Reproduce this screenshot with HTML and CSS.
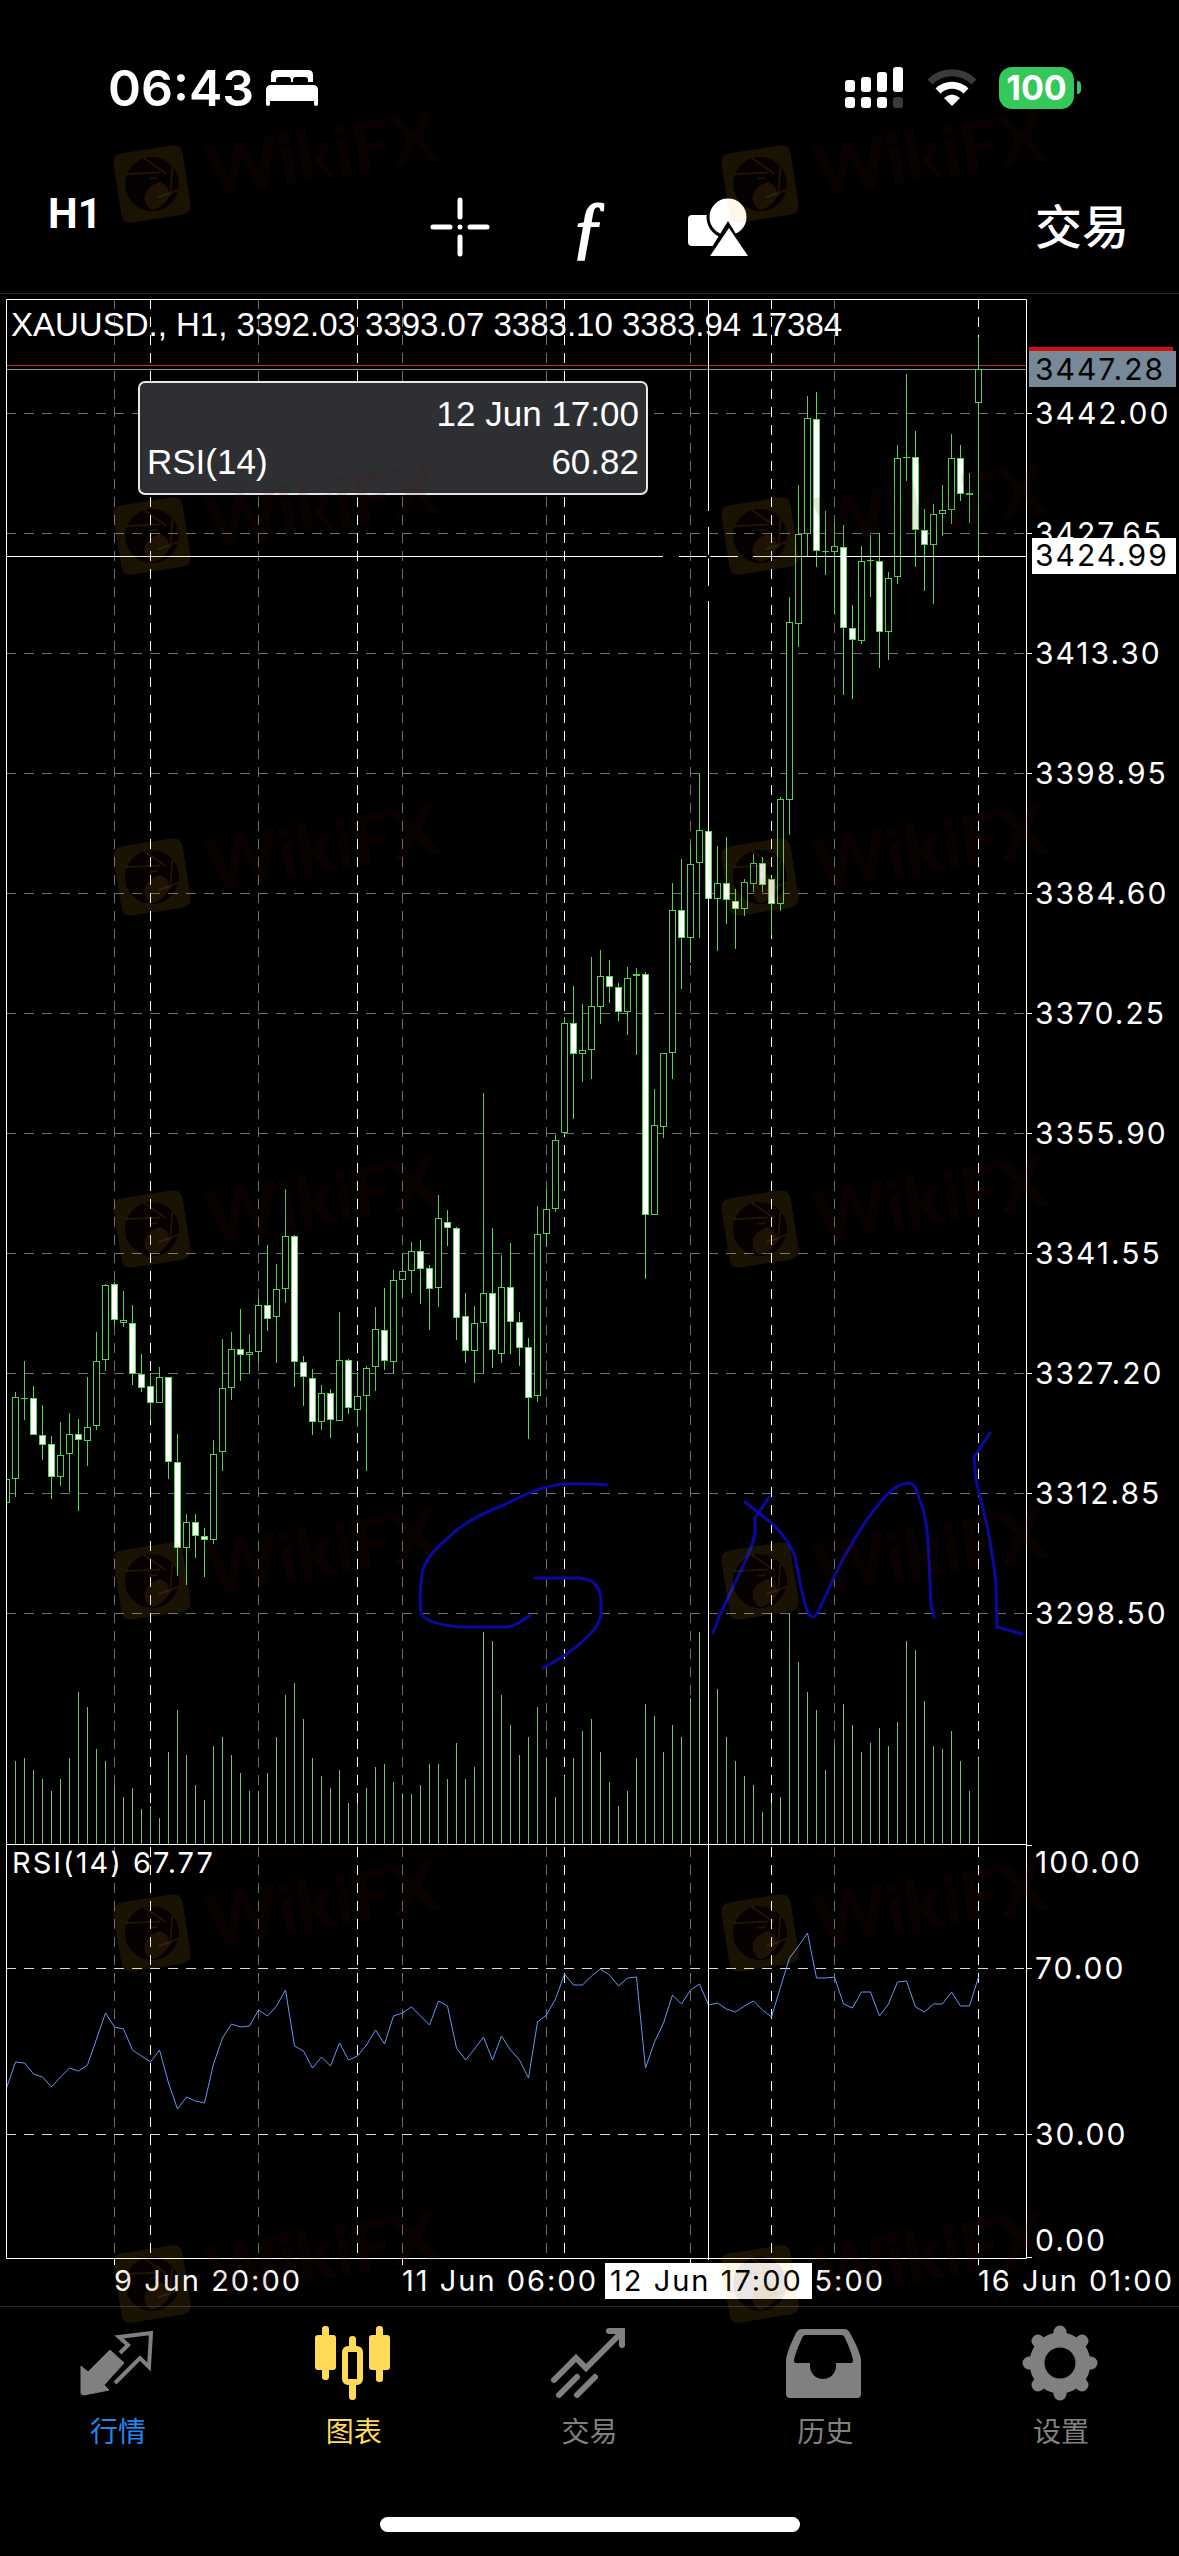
FILE: index.html
```html
<!DOCTYPE html>
<html lang="zh-CN">
<head>
    <meta charset="UTF-8">
    <meta name="viewport" content="width=device-width, initial-scale=1.0">
    <title>XAUUSD H1</title>
    <link rel="stylesheet" href="styles.css">
</head>
<body>
    <div class="status-bar">
        <div class="status-left">
            <span class="clock">06:43</span>
            <svg class="bed" viewBox="0 0 52 36" width="52" height="36" fill="#fff">
                <path d="M5 12V5Q5 0 10 0H42Q47 0 47 5V12H42V10Q42 7 39 7H30Q27 7 27 10V12H25V10Q25 7 22 7H13Q10 7 10 10V12Z"/>
                <path d="M0 34V20Q0 15 5 15H47Q52 15 52 20V34Q52 36 50 36Q48 36 48 34V31H4V34Q4 36 2 36Q0 36 0 34Z"/>
            </svg>
        </div>
        <div class="status-right">
            <svg viewBox="0 0 60 42" width="60" height="42" fill="#fff">
                <rect x="0" y="13" width="10" height="12" rx="3"/>
                <rect x="16" y="10" width="10" height="15" rx="3"/>
                <rect x="32" y="5" width="10" height="20" rx="3"/>
                <rect x="48" y="0" width="10" height="25" rx="3"/>
                <rect x="0" y="30" width="10" height="11" rx="3"/>
                <rect x="16" y="30" width="10" height="11" rx="3"/>
                <rect x="32" y="30" width="10" height="11" rx="3"/>
                <rect x="48" y="30" width="10" height="11" rx="3" fill="#3a3a3a"/>
            </svg>
            <svg viewBox="0 0 50 38" width="50" height="38">
                <path d="M3 13A31 31 0 0 1 47 13" fill="none" stroke="#3a3a3a" stroke-width="7"/>
                <path d="M11 22A20 20 0 0 1 39 22" fill="none" stroke="#fff" stroke-width="7"/>
                <path d="M25 37L17 29Q25 22 33 29Z" fill="#fff"/>
            </svg>
            <div class="battery">100</div>
        </div>
    </div>

    <header class="toolbar">
        <button class="timeframe">H1</button>
        <div class="tools">
            <button aria-label="Crosshair">
                <svg viewBox="0 0 60 60" width="60" height="60" stroke="#fff" stroke-width="5" stroke-linecap="round">
                    <path d="M30 3V20M30 40V57M3 30H20M40 30H57M30 30V30"/>
                </svg>
            </button>
            <button class="indicator" aria-label="Indicators">ƒ</button>
            <button aria-label="Objects">
                <svg viewBox="0 0 60 60" width="60" height="60" fill="#fff">
                    <rect x="0" y="18" width="36" height="31" rx="4"/>
                    <circle cx="40" cy="20" r="20" stroke="#000" stroke-width="3"/>
                    <path d="M40 24L64 63H16Z" fill="#000"/>
                    <path d="M41 31L60 59H22Z"/>
                </svg>
            </button>
        </div>
        <button class="trade">交易</button>
    </header>

    <main class="chart">
        <svg id="chart" viewBox="0 294 1179 2012"></svg>
        <div class="tooltip">
            <div class="tooltip-date">12 Jun 17:00</div>
            <div class="tooltip-row"><span>RSI(14)</span><span>60.82</span></div>
        </div>
    </main>

    <nav class="tabs">
        <a class="tab tab-quotes" href="#">
            <svg viewBox="0 0 80 80" width="80" height="80">
                <path d="M3 43L10 49L32 27L46 40L26 62L31 67L6 72Q3 72 3 70Z" fill="currentColor" stroke="currentColor" stroke-linejoin="round"/>
                <path d="M42 30L50 22L41 14L73 10L71 44L62 35L37 60" fill="none" stroke="currentColor" stroke-width="4"/>
            </svg>
            <span>行情</span>
        </a>
        <a class="tab tab-active" href="#">
            <svg viewBox="0 0 80 80" width="80" height="80" fill="currentColor">
                <rect x="1" y="12" width="21" height="35" rx="3"/>
                <rect x="8" y="3" width="7" height="54" rx="3"/>
                <rect x="55" y="12" width="21" height="35" rx="3"/>
                <rect x="62" y="3" width="7" height="56" rx="3"/>
                <rect x="31" y="26" width="15" height="33" rx="3" fill="none" stroke="currentColor" stroke-width="6"/>
                <path d="M35 25V16Q35 13 38.5 13Q42 13 42 16V25ZM35 60V74Q35 77 38.5 77Q42 77 42 74V60Z"/>
            </svg>
            <span>图表</span>
        </a>
        <a class="tab" href="#">
            <svg viewBox="0 0 80 80" width="80" height="80" fill="none" stroke="currentColor" stroke-width="6" stroke-linecap="round">
                <path d="M5 57L27 35L37 45L73 9M60 8H73V22"/>
                <path d="M10 72L28 54M28 72L46 54"/>
            </svg>
            <span>交易</span>
        </a>
        <a class="tab" href="#">
            <svg viewBox="0 0 80 80" width="80" height="80" fill="currentColor">
                <path fill-rule="evenodd" d="M1 71V38Q1 30 11 10Q13 6 17 6H59Q63 6 65 10Q76 30 76 38V71Q76 75 72 75H5Q1 75 1 71ZM9 38Q9 40 11 40H25V43A13 13 0 0 0 51 43V40H66Q68 40 68 38Q68 33 60 15Q59 12 56 12H21Q18 12 17 15Q9 33 9 38Z"/>
            </svg>
            <span>历史</span>
        </a>
        <a class="tab" href="#">
            <svg viewBox="0 0 80 80" width="80" height="80" fill="none" stroke="currentColor">
                <circle cx="39" cy="40" r="23" stroke-width="15"/>
                <path stroke-width="13" stroke-linecap="round" d="M39 9V16M39 64V71M8 40H15M63 40H70M17 18L22 23M56 57L61 62M17 62L22 57M56 23L61 18"/>
            </svg>
            <span>设置</span>
        </a>
    </nav>
    <div class="home-indicator"></div>

    <svg class="watermark" id="watermark" viewBox="0 0 1179 2556" aria-hidden="true"></svg>

    <script src="chart.js"></script>
</body>
</html>
```
FILE: styles.css
```css
* {
    margin: 0;
    padding: 0;
    box-sizing: border-box;
}

body {
    position: relative;
    min-height: 100vh;
    display: flex;
    flex-direction: column;
    background: #000;
    color: #fff;
    font-family: Inter, 'Noto Sans CJK SC', sans-serif;
}

button {
    display: flex;
    background: none;
    border: none;
    color: #fff;
    font-family: inherit;
}

/* status bar */
.status-bar {
    display: flex;
    justify-content: space-between;
    align-items: center;
    height: 120px;
    padding: 56px 97px 0 108px;
}

.status-left,
.status-right {
    display: flex;
    align-items: center;
    gap: 22px;
}

.status-left {
    gap: 12px;
}

.clock {
    font-size: 50px;
    font-weight: 600;
}

.battery {
    position: relative;
    width: 75px;
    height: 42px;
    margin-right: 8px;
    border-radius: 13px;
    background: #34c759;
    font-size: 34px;
    font-weight: 700;
    line-height: 42px;
    text-align: center;
}

.battery::after {
    content: '';
    position: absolute;
    right: -7px;
    top: 14px;
    width: 4px;
    height: 13px;
    border-radius: 0 4px 4px 0;
    background: #34c759;
}

/* toolbar */
.toolbar {
    display: grid;
    grid-template-columns: 1fr auto 1fr;
    align-items: center;
    height: 174px;
    padding: 40px 50px 0 48px;
    border-bottom: 1px solid #2a2a2a;
}

.timeframe {
    padding-bottom: 26px;
    font-family: Roboto, sans-serif;
    font-size: 42px;
    font-weight: 700;
    line-height: 46px;
}

.tools {
    display: flex;
    align-items: center;
    gap: 69px;
}

.tools button {
    width: 60px;
    height: 60px;
    align-items: center;
    justify-content: center;
}

.tools .indicator {
    font-family: 'Liberation Serif', serif;
    font-size: 70px;
    font-style: italic;
    font-weight: 400;
    line-height: 56px;
    -webkit-text-stroke: 2px #fff;
}

.trade {
    justify-self: end;
    font-size: 47px;
    font-weight: 500;
    line-height: 60px;
}

/* chart */
.chart {
    position: relative;
}

.chart svg {
    display: block;
    width: 100%;
}

.frame { fill: none; stroke: #fff; }
.grid { fill: none; stroke: #707070; stroke-dasharray: 10 8; }
.grid-day { fill: none; stroke: #fff; stroke-dasharray: 10 8; }
.grid-level { fill: none; stroke: #d8d8d8; stroke-dasharray: 10 8; }
.ask { stroke: #c4303a; }
.bid { stroke: #87919c; }
.cross { fill: none; stroke: #fff; }
.candle { fill: #000; stroke: #58cc58; }
.candle-down { fill: #fff; stroke: #58d858; }
.volume { stroke: #74be74; }
.rsi { fill: none; stroke: #6199f0; }
.ink { fill: none; stroke: #0a0aa0; stroke-width: 3; stroke-linecap: round; stroke-linejoin: round; }

.axis {
    fill: #fff;
    font-size: 29px;
    letter-spacing: 2px;
}

.axis-price {
    font-size: 30px;
}

.axis-dark {
    fill: #000;
}

.title {
    fill: #fff;
    font-family: 'Liberation Sans', Arial, sans-serif;
    font-size: 33px;
}

.tooltip {
    position: absolute;
    left: 138px;
    top: 87px;
    width: 510px;
    padding: 7px;
    border: 2px solid #e6e6e8;
    border-radius: 7px;
    background: #2e2f33;
    font-family: 'Liberation Sans', Arial, sans-serif;
    font-size: 35px;
    line-height: 48px;
}

.tooltip-date {
    text-align: right;
}

.tooltip-row {
    display: flex;
    justify-content: space-between;
}

/* bottom tabs */
.tabs {
    display: flex;
    padding-top: 16px;
    border-top: 1px solid #2a2a2a;
}

.tab {
    flex: 1;
    display: flex;
    flex-direction: column;
    align-items: center;
    gap: 9px;
    color: #808080;
    font-size: 28px;
    line-height: 40px;
    text-decoration: none;
}

.tab-quotes span {
    color: #1e88f0;
}

.tab-active {
    color: #ffdb58;
}

.home-indicator {
    width: 420px;
    height: 15px;
    margin: auto auto 24px;
    border-radius: 8px;
    background: #fff;
}

.watermark {
    position: absolute;
    left: 0;
    top: 0;
    width: 100%;
    pointer-events: none;
}

.mark-tile {
    fill: rgba(255, 190, 30, 0.1);
    fill-rule: evenodd;
}

.mark-shade {
    fill: rgba(60, 10, 10, 0.1);
}

.mark-blades {
    fill: none;
    stroke: rgba(255, 190, 30, 0.1);
    stroke-width: 2;
}

.watermark text {
    fill: rgba(80, 15, 8, 0.12);
    font-family: Lato, sans-serif;
    font-size: 70px;
    font-weight: 900;
}
```
FILE: chart.js
```js
const chart = document.getElementById('chart');

function add(parent, tag, attrs, text) {
    const el = document.createElementNS('http://www.w3.org/2000/svg', tag);
    for (const key in attrs) el.setAttribute(key, attrs[key]);
    if (text) el.textContent = text;
    parent.appendChild(el);
    return el;
}

const path = (cls, d) => add(chart, 'path', { class: cls, d });
const barX = i => 6.5 + 9 * i;

// high, body top, body bottom, low, 1 = falling candle
const candles = [
    [1479,1479,1502,1502,0],[1392,1397,1478,1496,0],[1361,1398,1398,1419,0],[1386,1398,1434,1434,1],[1405,1435,1444,1459,1],
    [1436,1444,1476,1498,1],[1422,1455,1476,1485,0],[1413,1434,1453,1491,0],[1419,1434,1439,1510,1],[1377,1427,1440,1465,0],
    [1332,1361,1425,1429,0],[1284,1285,1359,1370,0],[1282,1284,1319,1324,1],[1291,1320,1322,1326,0],[1305,1323,1373,1384,1],
    [1354,1374,1387,1391,1],[1373,1386,1402,1419,1],[1367,1377,1402,1402,0],[1377,1377,1461,1478,1],[1434,1462,1547,1575,1],
    [1514,1522,1547,1584,0],[1514,1522,1535,1557,1],[1528,1536,1539,1576,1],[1440,1454,1539,1543,0],[1339,1388,1451,1470,0],
    [1332,1349,1387,1399,0],[1309,1349,1354,1380,1],[1334,1352,1354,1372,0],[1298,1305,1351,1362,0],[1245,1305,1318,1330,1],
    [1264,1289,1316,1362,0],[1189,1236,1288,1302,0],[1235,1236,1361,1386,1],[1356,1362,1376,1405,1],[1369,1378,1421,1434,1],
    [1385,1393,1421,1429,0],[1389,1393,1419,1437,1],[1312,1360,1420,1420,0],[1359,1360,1407,1413,1],[1372,1396,1409,1426,0],
    [1366,1368,1395,1470,0],[1307,1329,1366,1390,0],[1288,1330,1360,1369,1],[1270,1280,1361,1373,0],[1253,1271,1279,1296,0],
    [1242,1251,1270,1292,0],[1240,1251,1268,1303,1],[1265,1268,1288,1329,1],[1195,1218,1287,1306,0],[1210,1222,1227,1245,1],
    [1227,1228,1317,1339,1],[1293,1316,1350,1362,1],[1306,1323,1350,1382,0],[1093,1293,1322,1373,0],[1228,1293,1349,1367,1],
    [1255,1287,1353,1362,0],[1243,1287,1321,1353,1],[1312,1322,1347,1365,1],[1338,1347,1397,1438,1],[1206,1234,1395,1401,0],
    [1189,1209,1233,1246,0],[1135,1140,1208,1211,0],[1017,1023,1132,1134,0],[986,1023,1053,1118,1],[1004,1050,1053,1081,0],
    [957,1006,1049,1078,0],[950,976,1006,1023,0],[960,976,986,1002,1],[983,987,1011,1020,1],[967,978,1011,1034,0],
    [968,974,975,1054,0],[972,974,1214,1278,1],[1089,1125,1214,1214,0],[1053,1053,1126,1137,0],[883,910,1052,1078,0],
    [859,910,937,988,1],[844,864,937,962,0],[773,830,862,937,0],[831,831,898,898,1],[846,883,898,950,0],
    [837,883,899,923,1],[889,901,908,948,1],[879,882,908,915,0],[854,863,883,891,0],[857,863,884,891,1],
    [878,879,903,934,1],[797,799,903,910,0],[597,622,799,834,0],[485,534,623,646,0],[396,418,533,556,0],
    [392,419,550,566,1],[511,551,551,574,0],[523,546,551,613,0],[525,547,627,694,1],[605,628,639,698,1],
    [546,561,640,643,0],[535,560,560,596,0],[533,561,631,667,1],[572,578,631,659,0],[445,458,576,583,0],
    [374,457,457,480,0],[431,457,529,566,1],[509,530,544,590,1],[504,514,544,603,0],[485,510,513,535,0],
    [434,458,509,523,0],[445,458,493,500,1],[473,493,494,522,0],[337,369,402,554,0]
];

const volumes = [
    0,83,86,74,65,53,65,86,152,137,95,83,59,47,56,35,38,26,92,134,89,59,44,98,107,89,71,53,53,71,107,149,161,125,86,68,
    56,74,41,41,56,77,80,62,50,50,59,80,80,65,101,65,77,212,203,149,119,89,107,137,86,47,68,86,113,125,92,62,38,
    53,86,140,128,92,119,107,146,212,180,155,107,83,68,59,32,41,47,231,182,152,134,74,98,140,119,92,101,116,98,122,
    203,194,143,98,95,113,83,53,86
];

const rsi = [
    2088,2062,2063,2074,2077,2087,2077,2068,2071,2065,2039,2013,2027,2029,2050,2056,2062,2050,2083,2109,
    2097,2101,2103,2064,2038,2024,2027,2026,2010,2016,2006,1990,2046,2051,2068,2057,2066,2043,2060,2056,
    2045,2030,2044,2016,2013,2007,2016,2025,2001,2006,2048,2060,2049,2037,2060,2036,2050,2060,2078,2022,
    2015,1999,1974,1985,1985,1976,1969,1975,1986,1978,1977,2068,2042,2023,1995,2004,1990,1984,2005,2003,
    2009,2012,2006,2001,2010,2017,1987,1958,1946,1933,1978,1978,1977,2004,2008,1992,1992,2016,2004,1982,
    1981,2007,2012,2004,2004,1992,2006,2006,1977
];

// grid
const prices = ['3442.00', '3427.65', '3413.30', '3398.95', '3384.60', '3370.25', '3355.90', '3341.55', '3327.20', '3312.85', '3298.50'];
prices.forEach((price, k) => {
    const y = 413.5 + 120 * k;
    path('grid', `M6 ${y}H1026`);
    path('frame', `M1027 ${y}H1032`);
    add(chart, 'text', { class: 'axis axis-price', x: 1035, y: y + 10.5 }, price);
});
for (let x = 114.5; x < 900; x += 144) path('grid', `M${x} 299V2258`);
for (let x = 150.5; x < 1000; x += 207) path('grid-day', `M${x} 299V2258`);
[1968.5, 2134.5].forEach(y => {
    path('grid-level', `M6 ${y}H1026`);
    path('frame', `M1027 ${y}H1032`);
});
[['100.00', 1873], ['70.00', 1979], ['30.00', 2145], ['0.00', 2251]].forEach(([label, y]) => {
    add(chart, 'text', { class: 'axis axis-price', x: 1035, y }, label);
});

// bars
volumes.forEach((v, i) => path('volume', `M${barX(i)} ${1844 - v}V1844`));
path('ask', 'M6 365.5H1026');
path('bid', 'M6 369.5H1026');
candles.forEach(([high, top, bottom, low, down], i) => {
    const x = barX(i);
    const cls = down ? 'candle-down' : 'candle';
    path(cls, `M${x} ${high}V${low + 1}`);
    const left = Math.max(x - 3, 6.5);
    add(chart, 'rect', { class: cls, x: left, y: top + 0.5, width: x + 3 - left, height: Math.max(bottom - top, 0.1) });
});
path('rsi', 'M' + rsi.map((y, i) => barX(i) + ' ' + y).join('L'));

// drawn objects
path('ink', 'M607 1485Q585 1483 563 1484C540 1487 525 1494 506 1504C480 1514 460 1525 448 1538Q424 1558 422 1574Q419 1595 421 1613C424 1621 438 1625 460 1627H506C516 1626 522 1621 530 1615');
path('ink', 'M535 1578H580C594 1579 601 1588 601 1600V1612C601 1622 594 1631 585 1639C573 1651 560 1659 543 1668');
path('ink', 'M769 1497L755 1518V1532C753 1548 742 1568 733 1587L719 1617L713 1633');
path('ink', 'M745 1502L774 1525C784 1536 790 1544 794 1554C799 1572 800 1590 807 1610C810 1618 814 1619 818 1612C828 1592 835 1572 847 1552C858 1532 866 1520 878 1505C888 1492 898 1484 908 1483C914 1483 916 1488 918 1495C927 1516 928 1538 929 1560L931 1605L934 1617');
path('ink', 'M990 1433L974 1457L976 1480L988 1530C992 1556 996 1570 996 1590L997 1627L1022 1634');

// frame and crosshair
path('frame', 'M6.5 299.5H1026.5V2258.5H6.5ZM6 1844.5H1027M1027 1845.5H1032M1027 2257.5H1032');
[114.5, 402.5, 690.5, 978.5].forEach(x => path('frame', `M${x} 2258V2265`));
path('cross', 'M6 556.5H663M679 556.5H738M753 556.5H1026');
path('cross', 'M708.5 299V511M708.5 527V586M708.5 601V2260');
add(chart, 'circle', { cx: 708.5, cy: 556.5, r: 2, fill: '#000' });

add(chart, 'text', { class: 'title', x: 11, y: 336 }, 'XAUUSD., H1, 3392.03 3393.07 3383.10 3383.94 17384');
add(chart, 'text', { class: 'axis', x: 12, y: 1873 }, 'RSI(14) 67.77');

// price tags
add(chart, 'rect', { x: 1029, y: 347, width: 144, height: 5, fill: '#d01010' });
add(chart, 'rect', { x: 1029, y: 351, width: 147, height: 36, fill: '#778899' });
add(chart, 'text', { class: 'axis axis-price axis-dark', x: 1035, y: 380 }, '3447.28');
add(chart, 'rect', { x: 1032, y: 538, width: 144, height: 36, fill: '#fff' });
add(chart, 'text', { class: 'axis axis-price axis-dark', x: 1035, y: 566 }, '3424.99');

// dates
[['9 Jun 20:00', 114], ['11 Jun 06:00', 402], ['12 Jun 15:00', 690], ['16 Jun 01:00', 978]].forEach(([label, x]) => {
    add(chart, 'text', { class: 'axis', x, y: 2291 }, label);
});
add(chart, 'rect', { x: 605, y: 2263, width: 207, height: 36, fill: '#fff' });
add(chart, 'text', { class: 'axis axis-dark', x: 610, y: 2291 }, '12 Jun 17:00');

// watermark tiles
const watermark = document.getElementById('watermark');
const tile = 'M-25 -35H25Q35 -35 35 -25V25Q35 35 25 35H-25Q-35 35 -35 25V-25Q-35 -35 -25 -35Z';
const lens = 'M-27 0A27 27 0 1 0 27 0A27 27 0 1 0 -27 0Z';
const beak = 'M-4 26C-16 14 -8 2 8 -1L14 4L16 14C10 22 4 25 -4 26Z';
[184, 536, 877, 1229, 1581, 1933, 2284].forEach(y => {
    [152, 760].forEach(x => {
        const g = add(watermark, 'g', { transform: `translate(${x} ${y}) rotate(-9)` });
        add(g, 'path', { class: 'mark-tile', d: tile + lens + beak });
        add(g, 'path', { class: 'mark-shade', d: lens });
        add(g, 'path', { class: 'mark-blades', d: 'M-24 -14L10 -10M-4 -27L16 -8M23 -14L16 14M25 10L4 14M-2 -6L6 -5' });
        add(g, 'text', { x: 55, y: 22 }, 'WikiFX');
    });
});
```
